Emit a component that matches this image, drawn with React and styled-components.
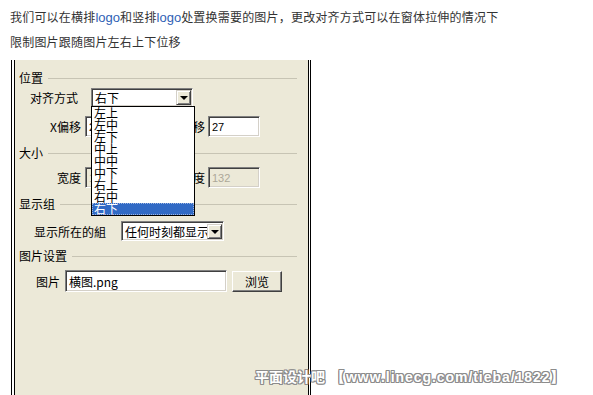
import React from 'react'
import styled, { createGlobalStyle } from 'styled-components'

const GlobalStyle = createGlobalStyle`
  html, body {
    margin: 0;
    padding: 0;
    background: #fff;
    overflow: hidden;
  }
  body {
    font-family: "Noto Sans CJK SC", "Liberation Sans", sans-serif;
  }
`

const Page = styled.div`
  position: relative;
  width: 593px;
  height: 395px;
  overflow: hidden;
  box-sizing: border-box;
  padding: 5px 0 0 10px;
`

const Intro = styled.p`
  margin: 0;
  font-size: 12px;
  line-height: 24px;
  color: #333;
  letter-spacing: 0.2px;
  white-space: nowrap;
`

const Logo = styled.span`
  font-family: "Liberation Sans", Arial, sans-serif;
  font-size: 13px;
  letter-spacing: 0;
  color: #2f5fb5;
`

const Panel = styled.div`
  margin: 6px 0 0 1px;
  width: 300px;
  height: 345px;
  box-sizing: border-box;
  background: #ece9d8;
  background-clip: padding-box;
  border-left: 4px double #000;
  border-right: 3px double #000;
  padding: 11px 0 0 4px;
  font-size: 12px;
  color: #000;
`

const GroupHead = styled.div`
  display: flex;
  align-items: center;
  height: 14px;
  line-height: 14px;
  margin-top: ${p => p.$mt}px;
  &::after {
    content: '';
    flex: 1;
    border-top: 1px solid #c7c4b4;
    margin: 1px 11px 0 5px;
  }
`

const Row = styled.div`
  display: flex;
  align-items: center;
  height: ${p => p.$h}px;
  margin-top: ${p => p.$mt}px;
`

const Label = styled.span`
  flex: none;
  width: ${p => p.$w}px;
  margin-right: ${p => p.$gap}px;
  text-align: right;
  white-space: nowrap;
`

const sunken = `
  box-sizing: border-box;
  border: 1px solid;
  border-color: #808080 #fff #fff #808080;
  box-shadow: inset 1px 1px #404040, inset -1px -1px #d4d0c8;
`

const TextBox = styled.div`
  ${sunken}
  flex: none;
  width: ${p => p.$w}px;
  height: ${p => p.$h}px;
  padding: 0 3px;
  display: flex;
  align-items: center;
  overflow: hidden;
  white-space: nowrap;
  background: ${p => (p.$disabled ? '#ece9d8' : '#fff')};
  color: ${p => (p.$disabled ? '#aca899' : '#000')};
  font-family: ${p => (p.$num ? '"Liberation Sans", Arial, sans-serif' : 'inherit')};
  font-size: ${p => (p.$num ? 11 : 12)}px;
`

const Combo = styled.div`
  ${sunken}
  position: relative;
  flex: none;
  width: ${p => p.$w}px;
  height: ${p => p.$h}px;
  background: #fff;
  display: flex;
  align-items: center;
`

const ComboText = styled.span`
  flex: 1;
  min-width: 0;
  padding-left: 3px;
  overflow: hidden;
  white-space: nowrap;
`

const DropButton = styled.span`
  flex: none;
  width: 15px;
  height: 15px;
  margin-right: 1px;
  box-sizing: border-box;
  background: #ece9d8;
  border: 1px solid;
  border-color: #d4d0c8 #404040 #404040 #d4d0c8;
  box-shadow: inset 1px 1px #fff, inset -1px -1px #808080;
  display: flex;
  align-items: center;
  justify-content: center;
  &::after {
    content: '';
    border-left: 4px solid transparent;
    border-right: 4px solid transparent;
    border-top: 4px solid #000;
    margin-top: 1px;
  }
`

const DropList = styled.ul`
  position: absolute;
  top: 100%;
  left: -1px;
  width: 104px;
  margin: 0;
  padding: 0;
  list-style: none;
  box-sizing: border-box;
  background: #fff;
  border: 1px solid #000;
  z-index: 5;
`

const DropItem = styled.li`
  height: 12px;
  line-height: 12px;
  padding-left: 2px;
  font-size: 12px;
  background: ${p => (p.$active ? '#316ac5' : 'transparent')};
  color: ${p => (p.$active ? '#fff' : '#000')};
  outline: ${p => (p.$active ? '1px dotted #9fb6e0' : 'none')};
  outline-offset: -1px;
`

const Button = styled.button`
  flex: none;
  width: 50px;
  height: 21px;
  margin-left: 5px;
  padding: 0;
  font: 12px "Noto Sans CJK SC", sans-serif;
  color: #000;
  background: #ece9d8;
  border: 1px solid;
  border-color: #fff #404040 #404040 #fff;
  box-shadow: inset -1px -1px #808080;
`

const Watermark = styled.div`
  position: absolute;
  left: 255px;
  top: 367px;
  font-family: "Noto Sans CJK SC", sans-serif;
  font-weight: bold;
  font-size: 14px;
  line-height: 18px;
  color: #fff;
  white-space: nowrap;
  text-shadow: 1px 0 #8c8c8c, -1px 0 #8c8c8c, 0 1px #8c8c8c, 0 -1px #8c8c8c,
    1px 1px #8c8c8c, -1px -1px #8c8c8c, 1px -1px #8c8c8c, -1px 1px #8c8c8c;
`

const WatermarkUrl = styled.span`
  font-family: "Liberation Sans", Arial, sans-serif;
  letter-spacing: 0.95px;
  margin-left: 6px;
`

const alignOptions = ['左上', '左中', '左下', '中上', '中中', '中下', '右上', '右中', '右下']

export default function App() {
  return (
    <Page>
      <GlobalStyle />
      <Intro>
        我们可以在横排<Logo>logo</Logo>和竖排<Logo>logo</Logo>处置换需要的图片，更改对齐方式可以在窗体拉伸的情况下
        <br />
        限制图片跟随图片左右上下位移
      </Intro>

      <Panel>
        <GroupHead $mt={0}>位置</GroupHead>
        <Row $h={19} $mt={3}>
          <Label $w={59} $gap={13}>对齐方式</Label>
          <Combo $w={102} $h={19}>
            <ComboText>右下</ComboText>
            <DropButton />
            <DropList>
              {alignOptions.map(o => (
                <DropItem key={o} $active={o === '右下'}>{o}</DropItem>
              ))}
            </DropList>
          </Combo>
        </Row>
        <Row $h={21} $mt={9}>
          <Label $w={62} $gap={4}>X偏移</Label>
          <TextBox $w={52} $h={21} $num>27</TextBox>
          <Label $w={68} $gap={3}>Y偏移</Label>
          <TextBox $w={52} $h={21} $num>27</TextBox>
        </Row>

        <GroupHead $mt={9}>大小</GroupHead>
        <Row $h={21} $mt={7}>
          <Label $w={62} $gap={4}>宽度</Label>
          <TextBox $w={52} $h={21} $num $disabled>132</TextBox>
          <Label $w={68} $gap={3}>高度</Label>
          <TextBox $w={52} $h={21} $num $disabled>132</TextBox>
        </Row>

        <GroupHead $mt={9}>显示组</GroupHead>
        <Row $h={20} $mt={10}>
          <Label $w={87} $gap={15}>显示所在的組</Label>
          <Combo $w={103} $h={20}>
            <ComboText>任何时刻都显示</ComboText>
            <DropButton />
          </Combo>
        </Row>

        <GroupHead $mt={8}>图片设置</GroupHead>
        <Row $h={22} $mt={7}>
          <Label $w={41} $gap={5}>图片</Label>
          <TextBox $w={162} $h={22}>横图.png</TextBox>
          <Button>浏览</Button>
        </Row>
      </Panel>

      <Watermark>
        平面设计吧<WatermarkUrl>【www.linecg.com/tieba/1822】</WatermarkUrl>
      </Watermark>
    </Page>
  )
}
